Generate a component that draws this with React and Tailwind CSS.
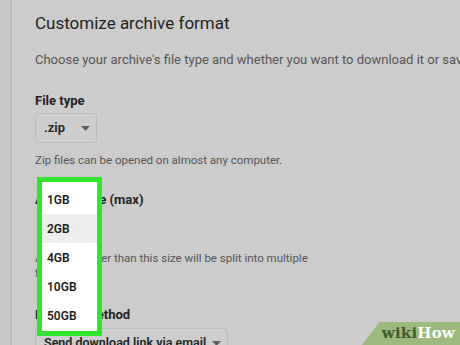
import React from 'react';

const sizes = ['1GB', '2GB', '4GB', '10GB', '50GB'];

const Caret = () => (
  <svg width="9" height="5" viewBox="0 0 9 5" className="shrink-0">
    <path d="M0 0h9L4.5 5z" fill="#5f5f5f" />
  </svg>
);

const App = () => {
  return (
    <div
      className="relative w-[460px] h-[345px] overflow-hidden flex bg-[#cccccc] text-[#222]"
      style={{ fontFamily: 'Roboto, "Liberation Sans", sans-serif' }}
    >
      {/* left rail */}
      <div className="w-[12px] shrink-0 bg-[#c8c8c8] border-r-2 border-[#b9b9b9]" />

      {/* page content */}
      <div className="flex-1 pl-[23px] pt-[10px] whitespace-nowrap">
        <h1 className="text-[17px] leading-[26px] text-[#1f1f1f]">Customize archive format</h1>
        <p className="mt-[16px] text-[13px] leading-[16px] text-[#555]">
          Choose your archive's file type and whether you want to download it or save it to a cloud service
        </p>

        <h2 className="mt-[25px] text-[13px] leading-[16px] font-bold text-[#222]">File type</h2>
        <div className="mt-[4px] w-[62px] h-[30px] flex items-center justify-between pl-[8px] pr-[6px] border border-[#bdbdbd] rounded-[3px] bg-[#cdcdcd]">
          <span className="text-[13px] font-semibold text-[#222]">.zip</span>
          <Caret />
        </div>
        <p className="mt-[10px] text-[11.5px] leading-[14px] text-[#555]">
          Zip files can be opened on almost any computer.
        </p>

        <h2 className="mt-[25px] text-[13px] leading-[16px] font-bold text-[#222]">Archive size (max)</h2>
        <p className="mt-[43px] text-[11.5px] leading-[15px] text-[#555]">
          Archives larger than this size will be split into multiple
          <br />
          files.
        </p>

        <h2 className="mt-[25px] text-[13px] leading-[17px] font-bold text-[#222]">Delivery method</h2>
        <div className="mt-[5px] w-[193px] h-[30px] flex items-center justify-between pl-[8px] pr-[6px] border border-[#bdbdbd] rounded-[3px] bg-[#cdcdcd]">
          <span className="text-[12.5px] font-semibold text-[#222]">Send download link via email</span>
          <Caret />
        </div>
      </div>

      {/* open size menu, highlighted */}
      <div className="absolute left-[37px] top-[177px] w-[65px] border-[5px] border-[#2ee62e] bg-white pt-[3px] pb-[1px]">
        {sizes.map((s) => (
          <div
            key={s}
            className={`h-[29px] flex items-center pl-[5px] text-[12px] font-semibold text-[#1e1e1e] ${s === '2GB' ? 'bg-[#eeeeee]' : ''}`}
          >
            {s}
          </div>
        ))}
      </div>

      {/* watermark */}
      <div className="absolute right-0 bottom-0 w-[98px] h-[23px] bg-[#9dba7e] [clip-path:polygon(18%_0,100%_0,100%_100%,0_100%)] flex items-center justify-end pr-[5px]">
        <span
          className="text-[15px] font-bold leading-none tracking-[0.2px]"
          style={{ fontFamily: '"DejaVu Serif", "Liberation Serif", serif' }}
        >
          <span className="text-[#3f5c30]">wiki</span>
          <span className="text-white">How</span>
        </span>
      </div>
    </div>
  );
};

export default App;
